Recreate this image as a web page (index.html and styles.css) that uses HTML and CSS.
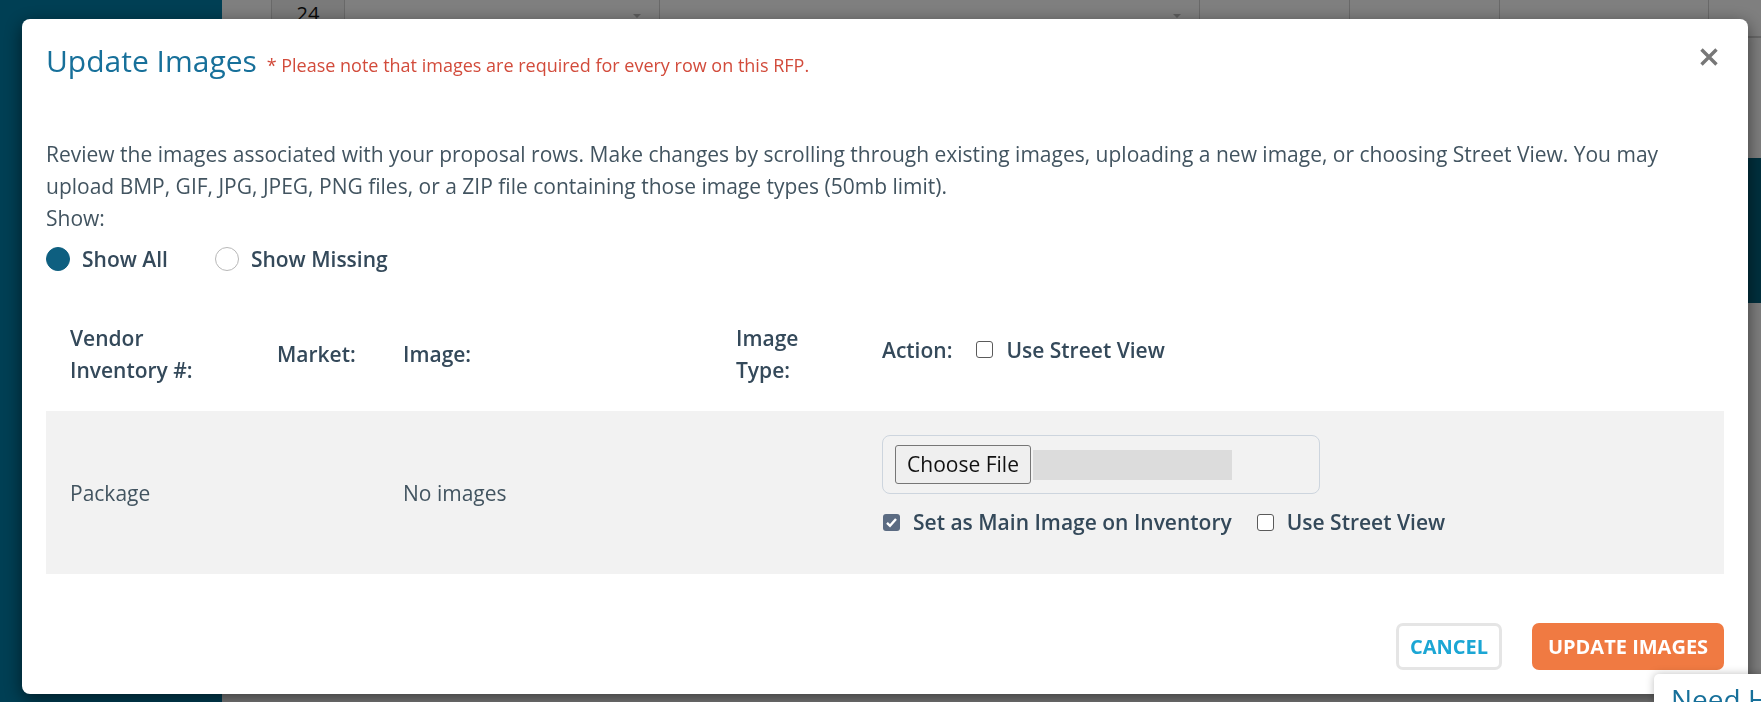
FILE: index.html
```html
<!DOCTYPE html>
<html lang="en">
<head>
    <meta charset="UTF-8">
    <meta name="viewport" content="width=device-width, initial-scale=1.0">
    <title>Update Images</title>
    <link rel="stylesheet" href="styles.css">
</head>
<body>
    <div class="page">
        <div class="sidebar"></div>
        <div class="page-main">
            <div class="grid-top">
                <div class="grid-cell cell-a"></div>
                <div class="grid-cell cell-num">24</div>
                <div class="grid-cell cell-b"><span class="caret"></span></div>
                <div class="grid-cell cell-c"><span class="caret"></span></div>
                <div class="grid-cell cell-d"></div>
                <div class="grid-cell cell-e"></div>
                <div class="grid-cell cell-f"></div>
                <div class="grid-cell cell-g"></div>
            </div>
            <div class="page-middle">
                <div class="side-actions">
                    <span>U</span>
                    <span>E</span>
                </div>
            </div>
            <div class="error-line">'# Units' must be a number for row. 1</div>
        </div>
    </div>

    <div class="backdrop"></div>

    <div class="modal">
        <div class="modal-header">
            <h4 class="modal-title">Update Images <span class="required-note">* Please note that images are required for every row on this RFP.</span></h4>
            <button class="close-btn" aria-label="Close">
                <svg width="20" height="20" viewBox="0 0 20 20">
                    <path d="M2.5 2.5 L17.5 17.5 M17.5 2.5 L2.5 17.5" stroke="#777" stroke-width="3.4" fill="none"/>
                </svg>
            </button>
        </div>

        <div class="modal-body">
            <p class="intro">Review the images associated with your proposal rows. Make changes by scrolling through existing images, uploading a new image, or choosing Street View. You may<br>upload BMP, GIF, JPG, JPEG, PNG files, or a ZIP file containing those image types (50mb limit).<br>Show:</p>

            <div class="filter-options">
                <label class="radio-option"><span class="radio checked"></span>Show All</label>
                <label class="radio-option"><span class="radio"></span>Show Missing</label>
            </div>

            <div class="image-table">
                <div class="table-row table-head">
                    <div>Vendor<br>Inventory #:</div>
                    <div>Market:</div>
                    <div>Image:</div>
                    <div>Image<br>Type:</div>
                    <div class="action-head">
                        <span>Action:</span>
                        <label class="check-option"><span class="checkbox"></span>Use Street View</label>
                    </div>
                </div>
                <div class="table-row table-item">
                    <div>Package</div>
                    <div></div>
                    <div>No images</div>
                    <div></div>
                    <div class="action-cell">
                        <div class="file-box">
                            <span class="file-btn">Choose File</span>
                            <span class="file-name"></span>
                        </div>
                        <div class="action-checks">
                            <label class="check-option">
                                <span class="checkbox checked">
                                    <svg width="17" height="17" viewBox="0 0 17 17"><path d="M4 8.8 L7 11.8 L13 5" stroke="#fff" stroke-width="2.4" fill="none"/></svg>
                                </span>Set as Main Image on Inventory
                            </label>
                            <label class="check-option"><span class="checkbox"></span>Use Street View</label>
                        </div>
                    </div>
                </div>
            </div>
        </div>

        <div class="modal-footer">
            <button class="btn btn-cancel">CANCEL</button>
            <button class="btn btn-primary">UPDATE IMAGES</button>
        </div>
    </div>

    <div class="help-tab">Need Help?</div>
</body>
</html>
```

FILE: styles.css
```css
* {
    margin: 0;
    padding: 0;
    box-sizing: border-box;
}

body {
    font-family: 'Open Sans', 'Liberation Sans', sans-serif;
    width: 1761px;
    height: 702px;
    overflow: hidden;
    color: #425460;
    background: #fff;
}

/* page behind the dialog */
.page {
    display: flex;
    height: 702px;
}

.sidebar {
    width: 222px;
    background: #007ea8;
}

.page-main {
    flex: 1;
    display: flex;
    flex-direction: column;
    background: #fff;
}

.grid-top {
    display: flex;
    height: 38px;
    border-bottom: 2px solid #d2d2d2;
}

.grid-cell {
    border-right: 1px solid #d2d2d2;
    position: relative;
}

.cell-a { width: 50px; }
.cell-num { width: 73px; text-align: center; color: #111; font-size: 20px; line-height: 28px; background: #f4f4f4; }
.cell-b { width: 315px; }
.cell-c { width: 540px; }
.cell-d { width: 150px; }
.cell-e { width: 150px; }
.cell-f { width: 209px; }
.cell-g { flex: 1; border-right: none; }

.caret {
    position: absolute;
    right: 18px;
    top: 14px;
    border: 4px solid transparent;
    border-top-color: #bbb;
}

.page-middle {
    flex: 1;
    display: flex;
    justify-content: flex-end;
    padding-top: 120px;
}

.side-actions {
    width: 40px;
    height: 145px;
    background: #00617d;
    display: flex;
    flex-direction: column;
    justify-content: space-around;
    color: #ddd;
    font-size: 20px;
    font-weight: 600;
}

.side-actions span {
    margin-left: -4px;
}

.error-line {
    padding: 0 0 6px 76px;
    color: #7a1e1e;
    font-size: 24px;
    line-height: 34px;
}

.backdrop {
    position: fixed;
    inset: 0;
    background: rgba(0, 0, 0, 0.5);
}

/* dialog */
.modal {
    position: fixed;
    left: 22px;
    top: 19px;
    width: 1726px;
    background: #fff;
    border-radius: 8px;
    box-shadow: 0 5px 18px rgba(0, 0, 0, 0.55);
}

.modal-header {
    position: relative;
    padding: 22px 24px 0;
}

.modal-title {
    font-size: 30px;
    font-weight: 400;
    line-height: 40px;
    color: #17709a;
}

.required-note {
    font-size: 18px;
    color: #d24b3b;
    margin-left: 2px;
}

.close-btn {
    position: absolute;
    right: 29px;
    top: 28px;
    width: 20px;
    height: 20px;
    border: none;
    background: none;
    display: flex;
}

.modal-body {
    padding: 53px 24px 0;
}

.intro {
    font-size: 21px;
    line-height: 32px;
}

.filter-options {
    display: flex;
    gap: 47px;
    margin-top: 9px;
    height: 32px;
    align-items: center;
}

.radio-option {
    display: flex;
    align-items: center;
    gap: 12px;
    font-size: 21px;
    font-weight: 600;
    color: #34495a;
}

.radio {
    width: 24px;
    height: 24px;
    border-radius: 50%;
    border: 1px solid #b8b8b8;
    background: #fff;
}

.radio.checked {
    border-color: #0e5f80;
    background: #0e5f80;
}

.image-table {
    margin-top: 31px;
}

.table-row {
    display: grid;
    grid-template-columns: 207px 126px 333px 146px 1fr;
    align-items: center;
    padding-left: 24px;
    font-size: 21px;
    line-height: 32px;
}

.table-head {
    padding-top: 16px;
    padding-bottom: 25px;
    font-weight: 600;
    color: #34495a;
}

.action-head {
    display: flex;
    align-items: center;
    gap: 24px;
    margin-bottom: 9px;
}

.check-option {
    display: flex;
    align-items: center;
    gap: 13px;
    font-weight: 600;
    color: #34495a;
}

.checkbox {
    width: 17px;
    height: 17px;
    border: 1.5px solid #5a5a5a;
    border-radius: 3px;
    background: #fff;
    display: flex;
}

.checkbox.checked {
    border: none;
    background: #5b6b82;
}

.table-item {
    background: #f2f2f2;
    height: 163px;
    color: #425460;
}

.action-cell {
    padding: 24px 0 36px;
}

.file-box {
    width: 438px;
    height: 59px;
    border: 1px solid #cdd5de;
    border-radius: 8px;
    display: flex;
    align-items: center;
    padding-left: 12px;
}

.file-btn {
    width: 136px;
    height: 39px;
    border: 1px solid #767676;
    border-radius: 3px;
    background: #efefef;
    color: #111;
    font-size: 21px;
    line-height: 37px;
    text-align: center;
}

.file-name {
    width: 199px;
    height: 30px;
    margin-left: 2px;
    background: #dcdcdc;
}

.action-checks {
    display: flex;
    gap: 25px;
    margin-top: 12px;
    margin-left: 1px;
}

.modal-footer {
    display: flex;
    justify-content: flex-end;
    gap: 30px;
    padding: 49px 24px 24px;
}

.btn {
    height: 47px;
    border-radius: 7px;
    font-family: 'Open Sans', 'Liberation Sans', sans-serif;
    font-size: 20px;
    font-weight: 700;
}

.btn-cancel {
    width: 106px;
    border: 3px solid #e5e5e5;
    background: #fff;
    color: #1ba6d4;
}

.btn-primary {
    width: 192px;
    border: none;
    background: #f07a42;
    color: #fff;
}

.help-tab {
    position: fixed;
    left: 1654px;
    top: 674px;
    width: 140px;
    height: 50px;
    background: #fff;
    border-radius: 5px;
    box-shadow: 0 0 8px rgba(0, 0, 0, 0.25);
    padding: 6px 0 0 17px;
    font-size: 28px;
    color: #17709a;
    white-space: nowrap;
}
```
